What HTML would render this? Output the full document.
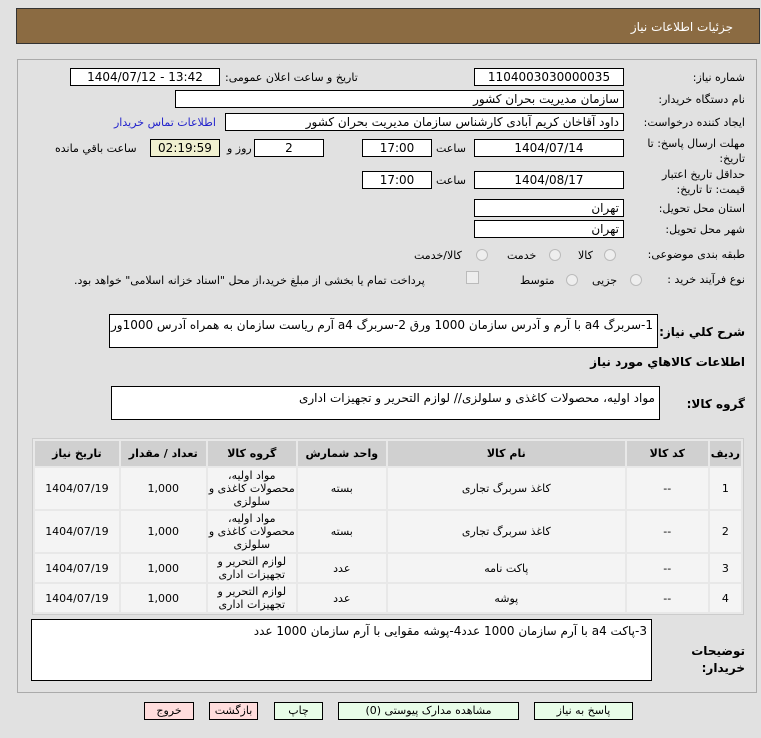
<!DOCTYPE html>
<html><head><meta charset="utf-8"><style>
body{margin:0;width:761px;height:738px;background:#e1e1e1;font-family:"DejaVu Sans","Liberation Sans",sans-serif;font-size:11px;color:#000;position:relative;overflow:hidden}
.a{position:absolute;white-space:nowrap;direction:rtl}
.b{position:absolute;background:#fff;border:1px solid #000;box-sizing:border-box;white-space:nowrap;overflow:hidden}
.c{text-align:center;line-height:16px;font-size:12px}
.r{text-align:right;direction:rtl;padding-right:4px;line-height:16px;font-size:12px}
.rad{position:absolute;width:12px;height:12px;border-radius:50%;border:1px solid #bbb;background:#eee;box-sizing:border-box}
table{position:absolute;left:32px;top:438px;width:712px;border-collapse:separate;border-spacing:2px;background:#e8e8e8;border:1px solid #ccc;direction:rtl;font-size:11px}
th{background:#d0d0d0;height:23px;font-weight:bold}
td{background:#f4f4f4;text-align:center;line-height:13px}
.btn{position:absolute;top:702px;height:18px;border:1px solid #000;box-sizing:border-box;text-align:center;line-height:16px;font-size:11px;direction:rtl}
</style></head><body>
<div class="a" style="left:16px;top:8px;width:744px;height:36px;background:#8b6b42;border:1px solid #333;box-sizing:border-box"></div>
<div class="a" style="right:28px;top:20px;color:#fff;font-size:12px">جزئيات اطلاعات نياز</div>
<div class="a" style="left:17px;top:59px;width:740px;height:634px;border:1px solid #aaa;box-sizing:border-box"></div>

<div class="a" style="right:16px;top:71px">شماره نیاز:</div>
<div class="b c" style="left:474px;top:68px;width:150px;height:18px">1104003030000035</div>
<div class="a" style="left:225px;top:71px">تاریخ و ساعت اعلان عمومی:</div>
<div class="b c" style="left:70px;top:68px;width:150px;height:18px">1404/07/12 - 13:42</div>

<div class="a" style="right:16px;top:93px">نام دستگاه خریدار:</div>
<div class="b r" style="left:175px;top:90px;width:449px;height:18px">سازمان مدیریت بحران کشور</div>

<div class="a" style="right:16px;top:116px">ایجاد کننده درخواست:</div>
<div class="b r" style="left:225px;top:113px;width:399px;height:18px">داود آقاخان کریم آبادی کارشناس سازمان مدیریت بحران کشور</div>
<div class="a" style="left:114px;top:116px;color:#22c">اطلاعات تماس خریدار</div>

<div class="a" style="right:16px;top:136px;line-height:15px">مهلت ارسال پاسخ: تا<br>تاریخ:</div>
<div class="b c" style="left:474px;top:139px;width:150px;height:18px">1404/07/14</div>
<div class="a" style="left:436px;top:142px">ساعت</div>
<div class="b c" style="left:362px;top:139px;width:70px;height:18px">17:00</div>
<div class="b c" style="left:254px;top:139px;width:70px;height:18px">2</div>
<div class="a" style="left:227px;top:142px">روز و</div>
<div class="b c" style="left:150px;top:139px;width:70px;height:18px;background:#f0f0d0">02:19:59</div>
<div class="a" style="left:55px;top:142px">ساعت باقي مانده</div>

<div class="a" style="right:16px;top:167px;line-height:15px">حداقل تاریخ اعتبار<br>قیمت: تا تاریخ:</div>
<div class="b c" style="left:474px;top:171px;width:150px;height:18px">1404/08/17</div>
<div class="a" style="left:436px;top:174px">ساعت</div>
<div class="b c" style="left:362px;top:171px;width:70px;height:18px">17:00</div>

<div class="a" style="right:16px;top:202px">استان محل تحویل:</div>
<div class="b r" style="left:474px;top:199px;width:150px;height:18px">تهران</div>
<div class="a" style="right:16px;top:223px">شهر محل تحویل:</div>
<div class="b r" style="left:474px;top:220px;width:150px;height:18px">تهران</div>

<div class="a" style="right:16px;top:248px">طبقه بندی موضوعی:</div>
<div class="rad" style="left:604px;top:249px"></div><div class="a" style="left:578px;top:249px">کالا</div>
<div class="rad" style="left:549px;top:249px"></div><div class="a" style="left:507px;top:249px">خدمت</div>
<div class="rad" style="left:476px;top:249px"></div><div class="a" style="left:414px;top:249px">کالا/خدمت</div>

<div class="a" style="right:16px;top:273px">نوع فرآیند خرید :</div>
<div class="rad" style="left:630px;top:274px"></div><div class="a" style="left:592px;top:274px">جزیی</div>
<div class="rad" style="left:566px;top:274px"></div><div class="a" style="left:520px;top:274px">متوسط</div>
<div style="position:absolute;left:466px;top:271px;width:11px;height:11px;border:1px solid #bbb;background:#eee"></div>
<div class="a" style="left:74px;top:274px">پرداخت تمام یا بخشی از مبلغ خرید،از محل "اسناد خزانه اسلامی" خواهد بود.</div>

<div class="a" style="right:16px;top:325px;font-weight:bold;font-size:12px">شرح کلي نياز:</div>
<div class="b r" style="left:109px;top:314px;width:549px;height:34px;line-height:20px">1-سربرگ a4 با آرم و آدرس سازمان 1000 ورق 2-سربرگ a4 آرم ریاست سازمان به همراه آدرس 1000ورق</div>
<div class="a" style="right:16px;top:355px;font-weight:bold;font-size:12px">اطلاعات کالاهاي مورد نياز</div>
<div class="a" style="right:16px;top:397px;font-weight:bold;font-size:12px">گروه کالا:</div>
<div class="b r" style="left:111px;top:386px;width:549px;height:34px;line-height:22px">مواد اولیه، محصولات کاغذی و سلولزی// لوازم التحریر و تجهیزات اداری</div>

<table>
<tr><th style="width:24px">رديف</th><th style="width:79px">کد کالا</th><th style="width:235px">نام کالا</th><th style="width:86px">واحد شمارش</th><th style="width:86px">گروه کالا</th><th style="width:83px">تعداد / مقدار</th><th>تاريخ نياز</th></tr>
<tr style="height:41px"><td>1</td><td>--</td><td>کاغذ سربرگ تجاری</td><td>بسته</td><td>مواد اولیه، محصولات کاغذی و سلولزی</td><td>1,000</td><td>1404/07/19</td></tr>
<tr style="height:41px"><td>2</td><td>--</td><td>کاغذ سربرگ تجاری</td><td>بسته</td><td>مواد اولیه، محصولات کاغذی و سلولزی</td><td>1,000</td><td>1404/07/19</td></tr>
<tr style="height:28px"><td>3</td><td>--</td><td>پاکت نامه</td><td>عدد</td><td>لوازم التحریر و تجهیزات اداری</td><td>1,000</td><td>1404/07/19</td></tr>
<tr style="height:28px"><td>4</td><td>--</td><td>پوشه</td><td>عدد</td><td>لوازم التحریر و تجهیزات اداری</td><td>1,000</td><td>1404/07/19</td></tr>
</table>

<div class="a" style="right:16px;top:643px;font-weight:bold;font-size:12px;line-height:17px">توضیحات<br>خریدار:</div>
<div class="b r" style="left:31px;top:619px;width:621px;height:62px;line-height:22px">3-پاکت a4 با آرم سازمان 1000 عدد4-پوشه مقوایی با آرم سازمان 1000 عدد</div>

<div class="btn" style="left:534px;width:99px;background:#e8fde8">پاسخ به نیاز</div>
<div class="btn" style="left:338px;width:181px;background:#e8fde8">مشاهده مدارک پیوستی (0)</div>
<div class="btn" style="left:274px;width:49px;background:#e8fde8">چاپ</div>
<div class="btn" style="left:209px;width:49px;background:#fdd">بازگشت</div>
<div class="btn" style="left:144px;width:50px;background:#fdd">خروج</div>
</body></html>
